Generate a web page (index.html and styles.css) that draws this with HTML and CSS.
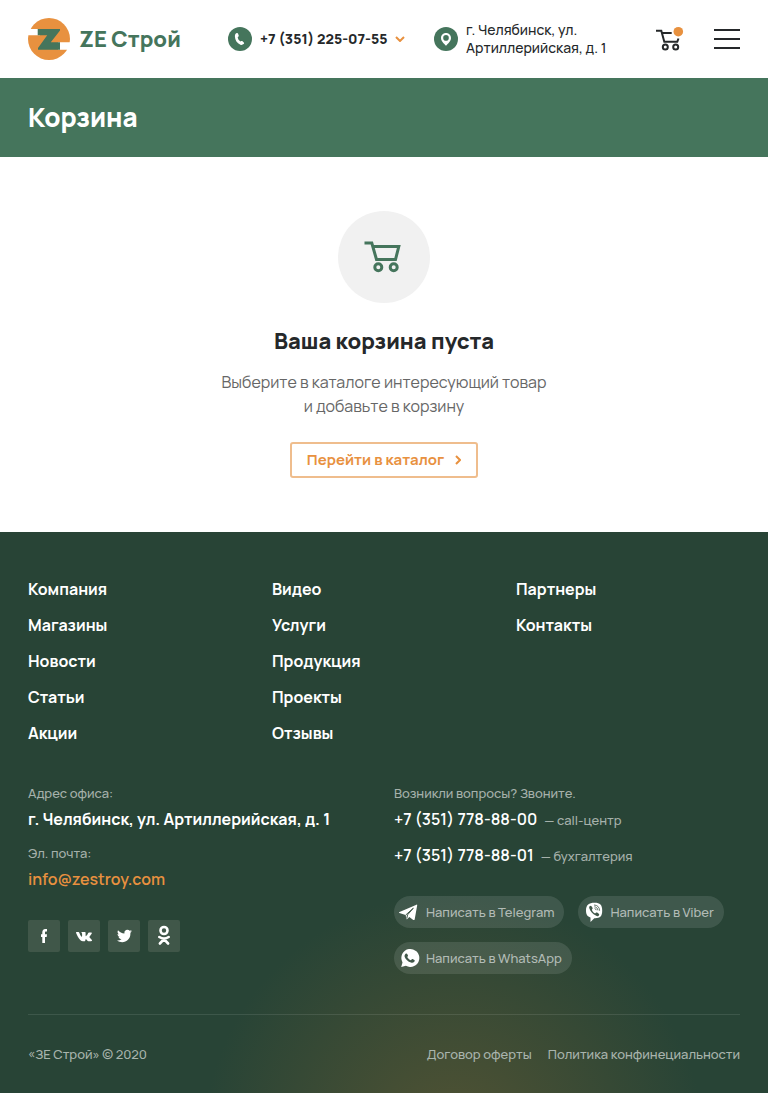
FILE: index.html
```html
<!DOCTYPE html>
<html lang="ru">
<head>
<meta charset="utf-8">
<meta name="viewport" content="width=device-width, initial-scale=1">
<title>Корзина — ZE Строй</title>
<link rel="stylesheet" href="styles.css">
</head>
<body>
<header class="header">
  <a class="logo" href="#">
    <svg class="logo-mark" viewBox="0 0 42 42" aria-hidden="true">
      <circle cx="21" cy="21" r="21" fill="#e8913f"/>
      <path fill="#fff" d="M0 11H12V17.3H0ZM30 24.3H42V31.7H30Z"/>
      <path fill="#45755c" d="M9.7 11H32V12.5L22.8 24.3H32V31.7H10V30L19.2 17.3H9.7Z"/>
    </svg>
    <span class="logo-text">ZE Строй</span>
  </a>
  <button class="phone" type="button">
    <span class="badge-icon">
      <svg width="24" height="24" viewBox="0 0 24 24" aria-hidden="true"><path fill="#fff" d="M8.300 6.200c.8-.5 1.400-.4 1.700.3l.7 1.900c.2.500.1.900-.3 1.200l-.7.600c.3 1.800 1.100 3.200 2.700 4.200l.9-.4c.5-.2.900-.1 1.200.2l1.300 1.300c.5.5.4 1.100-.2 1.600-1 .8-2.100 1-3.200.6-3.400-1.400-5.400-4.700-5.500-8.200 0-1.500.3-2.600 1.400-3.300z"/></svg>
    </span>
    <span class="phone-number">+7 (351) 225-07-55</span>
    <svg width="10" height="6" viewBox="0 0 10 6" fill="none" stroke="#e8913f" stroke-width="2" aria-hidden="true"><path d="M1 1l4 4 4-4"/></svg>
  </button>
  <address class="place">
    <span class="badge-icon">
      <svg width="24" height="24" viewBox="0 0 24 24" aria-hidden="true"><path fill="#fff" fill-rule="evenodd" d="M12 6c-2.900 0-5 2.200-5 4.900 0 3.100 3 5.600 5 7.800 2-2.200 5-4.700 5-7.800C17 8.200 14.900 6 12 6zm0 2.100a2.800 2.800 0 1 1 0 5.600 2.800 2.800 0 0 1 0-5.600z"/></svg>
    </span>
    <span>г. Челябинск, ул. Артиллерийская, д. 1</span>
  </address>
  <a class="cart-link" href="#" aria-label="Корзина">
    <svg width="28" height="28" viewBox="0 0 28 28" fill="none" stroke="#25282a" stroke-width="2" aria-hidden="true">
      <path d="M0 5.700H5.300L8.300 16.700H21.300L22.500 13.500M6.500 8H15.700"/><circle cx="9.300" cy="22" r="2.500"/><circle cx="19.700" cy="22" r="2.500"/>
      <circle cx="22.300" cy="6.700" r="4.800" fill="#e8913f" stroke="none"/>
    </svg>
  </a>
  <button class="burger" type="button" aria-label="Меню"><span></span><span></span><span></span></button>
</header>

<div class="title-bar"><h1>Корзина</h1></div>

<main class="empty">
  <div class="empty-icon">
    <svg width="40" height="40" viewBox="0 0 40 40" fill="none" stroke="#45755c" stroke-width="3" aria-hidden="true">
      <path d="M.5 6H7.800L12.500 22.500H31.500L34.800 9.500H9"/><circle cx="14.300" cy="30.300" r="3.500"/><circle cx="29.700" cy="30.300" r="3.500"/>
    </svg>
  </div>
  <h2>Ваша корзина пуста</h2>
  <p>Выберите в каталоге интересующий товар<br>и добавьте в корзину</p>
  <a class="catalog" href="#">Перейти в каталог
    <svg width="6" height="10" viewBox="0 0 6 10" fill="none" stroke="currentColor" stroke-width="2" aria-hidden="true"><path d="M1 1l4 4-4 4"/></svg>
  </a>
</main>

<footer class="footer">
  <nav class="nav" aria-label="Разделы">
    <ul>
      <li><a href="#">Компания</a></li><li><a href="#">Магазины</a></li><li><a href="#">Новости</a></li><li><a href="#">Статьи</a></li><li><a href="#">Акции</a></li>
    </ul>
    <ul>
      <li><a href="#">Видео</a></li><li><a href="#">Услуги</a></li><li><a href="#">Продукция</a></li><li><a href="#">Проекты</a></li><li><a href="#">Отзывы</a></li>
    </ul>
    <ul>
      <li><a href="#">Партнеры</a></li><li><a href="#">Контакты</a></li>
    </ul>
  </nav>
  <div class="contacts">
    <section>
      <p class="label">Адрес офиса:</p>
      <p class="value value-address">г. Челябинск, ул. Артиллерийская, д. 1</p>
      <p class="label">Эл. почта:</p>
      <p class="value"><a class="mail" href="mailto:info@zestroy.com">info@zestroy.com</a></p>
      <div class="social">
        <a href="#" aria-label="Facebook"><svg viewBox="0 0 32 32"><path d="M14.300 23V16.900H13V14.200H14.300V12.500C14.300 10.300 15.300 9 17.300 9H19V11.600H18C17.200 11.600 17 12 17 12.700V14.200H19L18.700 16.900H17V23Z"/></svg></a>
        <a href="#" aria-label="ВКонтакте"><svg viewBox="0 0 32 32"><path d="M15.800 21.200h1c.5-.1.500-.5.500-.9.100-1 .6-1.300 1.300-.6.600.6 1.100 1.400 1.800 1.500h2.600c.9 0 1.400-.5.900-1.200-.6-1-1.600-1.700-2.300-2.500-.3-.3-.2-.6 0-.9.800-1.100 1.900-2.200 2.300-3.500.1-.5-.2-.7-.7-.7h-2.200c-.4 0-.6.2-.8.500-.5 1.100-1.200 2.400-2.100 3.200-.3.200-.5 0-.5-.5v-2.800c0-.4-.2-.7-.7-.7h-3c-.5 0-.6.4-.3.700.5.500.5 1 .500 2.100 0 1 0 1.800-.4 1.800-.7 0-1.900-2.300-2.400-3.900-.1-.5-.4-.7-.9-.7H8.700c-.5 0-.8.300-.6.8.9 2.400 2.400 5.100 4.200 7 .9 1 2.200 1.300 3.500 1.300z"/></svg></a>
        <a href="#" aria-label="Twitter"><svg viewBox="0 0 32 32"><path d="M24 11.200c-.5.300-1.100.4-1.700.5.600-.4 1-1 1.300-1.700-.6.300-1.200.6-1.900.7a3.100 3.100 0 0 0-5.300 2.800c-2.500-.1-4.800-1.300-6.400-3.300-.9 1.500-.3 3.200.9 4.100-.5 0-1-.1-1.400-.4 0 1.500 1 2.800 2.500 3.100-.5.100-.9.100-1.400 0 .4 1.300 1.600 2.100 2.900 2.200A6.300 6.300 0 0 1 9 20.600C15.400 24.600 22.400 20.500 22.400 13.700v-.9c.6-.4 1.200-1 1.600-1.600z"/></svg></a>
        <a href="#" aria-label="Одноклассники"><svg viewBox="0 0 32 32" fill="none" stroke="#fff" stroke-width="2.600" stroke-linecap="round"><circle class="line" cx="16" cy="10.500" r="3.500"/><path class="line" d="M11.300 17c2.900 1.900 6.500 1.900 9.400 0M16 19.200L11.900 23.500M16 19.200L20.100 23.500"/></svg></a>
      </div>
    </section>
    <section>
      <p class="label">Возникли вопросы? Звоните.</p>
      <p class="value value-tel"><a href="tel:+73517788800">+7 (351) 778-88-00</a><small>— call-центр</small></p>
      <p class="value value-tel"><a href="tel:+73517788801">+7 (351) 778-88-01</a><small>— бухгалтерия</small></p>
      <div class="chats">
        <a href="#"><svg viewBox="0 0 22 20"><path fill="#fff" d="M19.200 3.200L16.700 17.200c-.2.900-.7 1.100-1.400.7l-4-2.800-2 1.900c-.5.500-.8.300-.9-.3l-.8-3.600-6.200-2.100c-.6-.3-.5-.8.100-1.100L18.500 2.700c.5-.2.800 0 .7.500z"/><path fill="none" stroke="#405749" d="M7.700 13L15.300 6.200L9.500 12.900L8.800 16.500"/></svg>Написать в Telegram</a>
        <a href="#"><svg viewBox="-2 0 22 20"><path fill="#fff" d="M10.500.8c5.600 0 7.700 2 7.700 7.800 0 6-2.100 7.800-7.900 7.600L6.500 20v-4.400C3.500 14.700 2 12.800 2 8.600 2 2.800 5 .8 10.500.8z"/><path fill="#405749" d="M5.600 4.300c.8-.8 1.300-.8 1.900 0l1 1.500c.4.600.2 1-.6 1.700.2 1.800 1.400 3.200 3.200 3.900l.8-.7c.4-.4.800-.4 1.200-.1l1.700 1.200c.8.600.4 1.600-.5 2.200-.7.400-1.500.200-2.500-.4C8.700 11.900 6.300 9.300 5.300 6.200c-.2-.8-.2-1.400.3-1.900z"/><path fill="none" stroke="#405749" stroke-width=".8" d="M10 3c3.500.1 5.500 2.200 5.600 5.700M10.300 4.800c2.200.2 3.400 1.500 3.600 3.600M10.600 6.500c1 .1 1.500.7 1.600 1.700"/></svg>Написать в Viber</a>
        <a href="#"><svg viewBox="-1 0 22 20"><path fill="#fff" d="M2.200 19l1.300-4.600A9 9 0 1 1 6.900 17.800z"/><path fill="#405749" d="M6.600 5.800c.6-.6 1.300-.5 1.600.1l.8 1.700c.1.400-.1.800-.8 1.500.9 1.600 2.100 2.600 3.700 3.200l.9-1.100c.2-.3.500-.3.800-.2l1.800.9c.5.300.4 1.200-.1 1.900-.8.900-2.100 1.200-3.300.8-3.100-.9-5.400-3.200-6.300-5.600-.4-1.200 0-2.400.9-3.200z"/></svg>Написать в WhatsApp</a>
      </div>
    </section>
  </div>
  <div class="legal">
    <span class="copyright">«ЗЕ Строй» © 2020</span>
    <a href="#">Договор оферты</a>
    <a href="#">Политика конфинециальности</a>
  </div>
</footer>
</body>
</html>
```
FILE: styles.css
```css
* { box-sizing: border-box; }
body {
  margin: 0;
  background: #fff;
  color: #25282a;
  font-family: Manrope, Inter, "Noto Sans", sans-serif;
  font-size: 16px;
  line-height: 24px;
}
h1, h2, p, ul { margin: 0; padding: 0; }
ul { list-style: none; }
a { color: inherit; text-decoration: none; }
button { padding: 0; border: 0; background: none; color: inherit; font: inherit; cursor: pointer; }
svg { display: block; flex: none; }

.header { display: flex; align-items: center; min-height: 78px; padding: 0 28px; }
.logo { display: flex; align-items: center; gap: 9px; width: 200px; }
.logo-mark { width: 42px; height: 42px; }
.logo-text { color: #45755c; font-size: 22px; font-weight: 900; white-space: nowrap; }
.badge-icon { flex: none; width: 24px; height: 24px; border-radius: 50%; background: #45755c; }
.phone { display: flex; align-items: center; gap: 8px; width: 206px; font-size: 14px; font-weight: 800; white-space: nowrap; }
.place { display: flex; align-items: center; gap: 8px; width: 190px; font-size: 14px; font-style: normal; font-weight: 500; line-height: 18px; }
.cart-link { margin-left: auto; }
.burger { display: flex; flex-direction: column; gap: 7px; width: 26px; margin-left: 30px; }
.burger span { height: 2px; width: 100%; background: #25282a; }

.title-bar { padding: 20px 28px 21px; background: #45755c; color: #fff; }
h1 { font-size: 26px; font-weight: 800; line-height: 38px; }

.empty { display: flex; flex-direction: column; align-items: center; padding: 54px 28px; text-align: center; }
.empty-icon { display: grid; place-items: center; width: 92px; height: 92px; border-radius: 50%; background: #f1f1f1; }
h2 { margin-top: 22px; font-size: 22px; font-weight: 800; line-height: 32px; }
.empty p { margin-top: 13px; color: #666; font-weight: 400; }
.catalog {
  display: flex; align-items: center; gap: 11px; margin-top: 24px; padding: 4px 15px;
  border: 2px solid #efbd8d; border-radius: 3px; color: #e8913f; font-size: 15px; font-weight: 700;
}

.footer {
  padding: 39px 28px 27px;
  background: radial-gradient(circle 250px at 59% calc(100% + 50px), #525333, #284436) #284436;
  color: #fff;
}
.nav { display: grid; grid-template-columns: repeat(3, 1fr); column-gap: 20px; }
.nav li { height: 36px; padding-top: 6px; font-weight: 700; }
.contacts { display: grid; grid-template-columns: repeat(2, minmax(0, 1fr)); column-gap: 20px; padding: 30px 0 40px; }
.label { color: #a6b1ab; font-size: 13px; font-weight: 500; }
.value { margin: 2px 0 10px; font-weight: 600; white-space: nowrap; }
.value-address { font-weight: 700; }
.mail { color: #e8913f; }
.value small { margin-left: 7px; color: #a6b1ab; font-size: 13px; font-weight: 500; }
.value-tel { height: 24px; }
.value-tel + .value-tel { margin-top: 12px; }
.social { display: flex; gap: 8px; margin-top: 29px; }
.social a { width: 32px; height: 32px; border-radius: 2px; background: #405749; }
.social path { fill: #fff; }
.social .line { fill: none; }
.chats { display: flex; flex-wrap: wrap; gap: 14px; margin-top: 29px; }
.chats a {
  display: flex; align-items: center; gap: 6px; padding: 4px 10px 4px 4px; border-radius: 16px;
  background: rgba(255, 255, 255, .11); color: #b2bbb6; font-size: 13px; font-weight: 500; white-space: nowrap;
}
.chats svg { width: 22px; height: 20px; }
.legal { display: flex; gap: 16px; padding-top: 27px; border-top: 1px solid rgba(255, 255, 255, .1); color: #a9b4ad; font-size: 13px; font-weight: 500; }
.copyright { margin-right: auto; }
```
